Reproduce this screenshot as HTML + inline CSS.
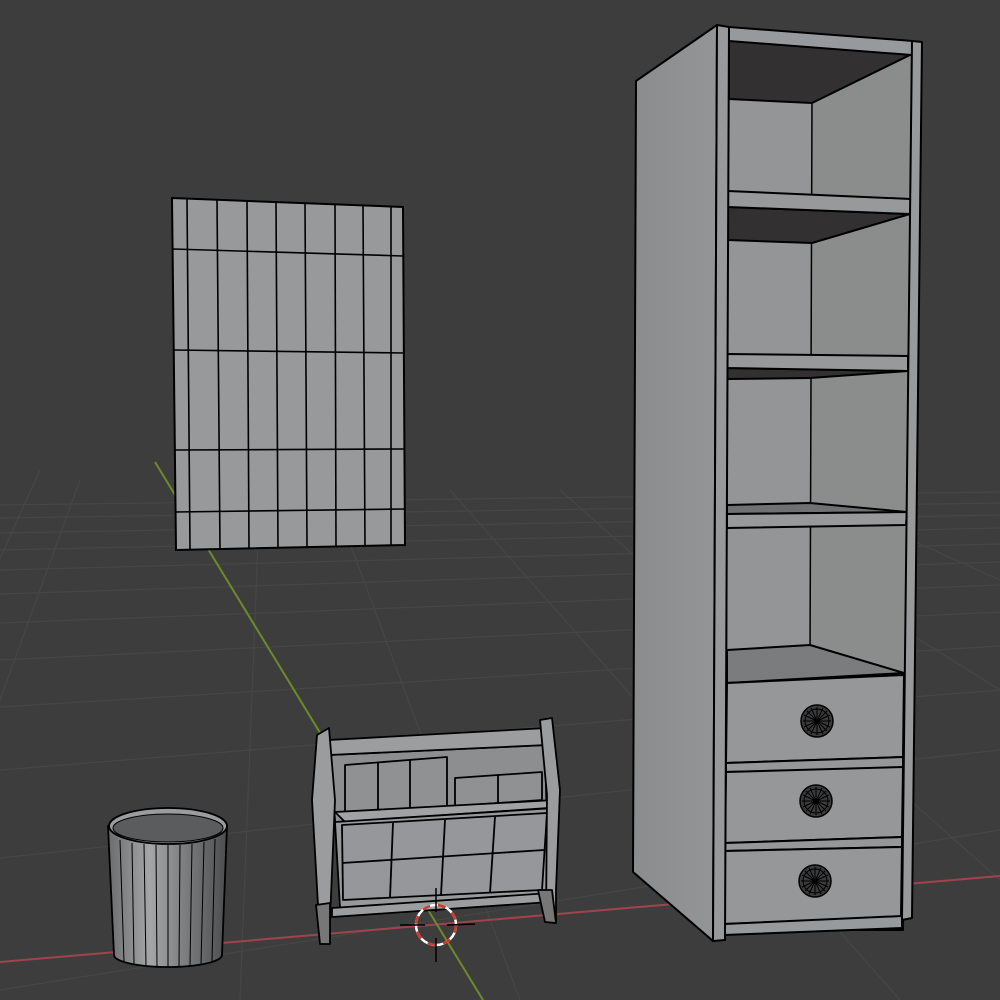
<!DOCTYPE html>
<html><head><meta charset="utf-8"><style>html,body{margin:0;padding:0;background:#3d3d3d;}svg{display:block}</style></head>
<body>
<svg width="1000" height="1000" viewBox="0 0 1000 1000" xmlns="http://www.w3.org/2000/svg">
<defs>
<linearGradient id="bin" x1="0" x2="1" y1="0" y2="0">
<stop offset="0" stop-color="#6a6c6d"/><stop offset="0.35" stop-color="#a4a6a7"/><stop offset="1" stop-color="#4c4d4e"/>
</linearGradient>
<linearGradient id="side" x1="0" x2="1" y1="0" y2="0">
<stop offset="0" stop-color="#8a8c8d"/><stop offset="1" stop-color="#939596"/>
</linearGradient>
</defs>
<rect width="1000" height="1000" fill="#3d3d3d"/>
<!-- grid -->
<g stroke="#464646" stroke-width="1.2" fill="none">
<line x1="0" y1="505" x2="1000" y2="492"/>
<line x1="0" y1="518" x2="1000" y2="503"/>
<line x1="0" y1="533" x2="1000" y2="515"/>
<line x1="0" y1="550" x2="1000" y2="528"/>
<line x1="0" y1="570" x2="1000" y2="544"/>
<line x1="0" y1="594" x2="1000" y2="562"/>
<line x1="0" y1="623" x2="1000" y2="585"/>
<line x1="0" y1="660" x2="1000" y2="612"/>
<line x1="0" y1="707" x2="1000" y2="646"/>
<line x1="0" y1="770" x2="1000" y2="690"/>
<line x1="0" y1="858" x2="1000" y2="750"/>
<line x1="0" y1="990" x2="1000" y2="830"/>
<line x1="40" y1="470" x2="-200" y2="1000"/>
<line x1="80" y1="480" x2="0" y2="700"/>
<line x1="260" y1="490" x2="240" y2="1000"/>
<line x1="330" y1="490" x2="520" y2="1000"/>
<line x1="450" y1="490" x2="900" y2="1000"/>
<line x1="560" y1="490" x2="1000" y2="880"/>
<line x1="680" y1="490" x2="1000" y2="690"/>
<line x1="800" y1="490" x2="1000" y2="580"/>
</g>
<!-- axes -->
<line x1="0" y1="962" x2="1000" y2="876" stroke="#a0434d" stroke-width="2"/>
<line x1="155" y1="462" x2="483" y2="1000" stroke="#6d8a2a" stroke-width="2"/>

<!-- poster -->
<polygon points="172,198 403,207 405,545 176,550" fill="#97999b" stroke="#000" stroke-width="2"/>
<g stroke="#000" stroke-width="1.6">
<line x1="187" y1="199" x2="190" y2="549"/><line x1="217" y1="200" x2="220" y2="549"/>
<line x1="247" y1="201" x2="249" y2="548"/><line x1="276" y1="202" x2="278" y2="548"/>
<line x1="305" y1="203" x2="307" y2="547"/><line x1="335" y1="204" x2="336" y2="547"/>
<line x1="363" y1="205" x2="365" y2="546"/><line x1="391" y1="206" x2="391" y2="546"/>
<line x1="173" y1="249" x2="403" y2="256"/><line x1="174" y1="350" x2="404" y2="353"/>
<line x1="175" y1="450" x2="405" y2="449"/><line x1="175" y1="512" x2="405" y2="509"/>
</g>

<!-- bookshelf -->
<g stroke="#000" stroke-width="2" stroke-linejoin="round">
<polygon points="636,81 717,25 713,941 633,872" fill="url(#side)"/>
<polygon points="729,40 912,53 903,930 727,930" fill="#8b8d8d"/>
<polygon points="729,40 812,45 810,700 727,700" fill="#939596" stroke="none"/>
<polygon points="729,40 912,54 812,103 729,99" fill="#323030"/>
<line x1="812" y1="103" x2="810" y2="660" stroke-width="1.5"/>
<polygon points="729,27 913,41 912,55 729,41" fill="#979a9c"/>
<polygon points="728,207 910,214 812,243 728,240" fill="#323030"/>
<polygon points="728,191 911,199 910,214 728,207" fill="#97999b"/>
<polygon points="727,368 908,371 810,378 727,379" fill="#323030"/>
<polygon points="727,354 908,356 908,371 727,368" fill="#97999b"/>
<polygon points="727,505 810,503 907,512 727,514" fill="#6f7172"/>
<polygon points="727,514 907,512 906,525 727,528" fill="#97999b"/>
<polygon points="727,650 810,645 904,673 727,683" fill="#7a7c7d"/>
<polygon points="727,683 904,675 903,757 726,763" fill="#959799"/>
<polygon points="726,763 903,757 903,768 726,772" fill="#959799"/>
<polygon points="726,772 903,767 902,837 725,843" fill="#959799"/>
<polygon points="725,843 902,837 902,847 725,851" fill="#959799"/>
<polygon points="725,851 902,847 901,917 724,924" fill="#959799"/>
<polygon points="724,924 902,916 902,928 724,935" fill="#979a9c"/>
<polygon points="717,25 729,27 725,940 713,941" fill="#97999b"/>
<polygon points="912,41 922,42 912,918 902,920" fill="#97999b"/>
</g>
<g fill="#3a3a3a" stroke="#000" stroke-width="1.5">
<circle cx="817" cy="721" r="16"/><circle cx="816" cy="801" r="16"/><circle cx="815" cy="881" r="16"/>
</g>
<g stroke="#000" stroke-width="1" fill="none">
<circle cx="817" cy="721" r="12"/><circle cx="816" cy="801" r="12"/><circle cx="815" cy="881" r="12"/>
<path d="M803 721h28M817 707v28M807 711l20 20M827 711l-20 20M804 715l26 12M804 727l26-12M811 708l12 26M823 708l-12 26"/>
<path d="M802 801h28M816 787v28M806 791l20 20M826 791l-20 20M803 795l26 12M803 807l26-12M810 788l12 26M822 788l-12 26"/>
<path d="M801 881h28M815 867v28M805 871l20 20M825 871l-20 20M802 875l26 12M802 887l26-12M809 868l12 26M821 868l-12 26"/>
</g>

<!-- magazine rack -->
<g stroke="#000" stroke-width="1.8" stroke-linejoin="round">
<polygon points="330,755 545,745 548,870 340,885" fill="#8c8e8f"/>
<polygon points="345,765 447,757 447,808 345,815" fill="#8f9193"/>
<line x1="378" y1="763" x2="378" y2="812"/><line x1="410" y1="760" x2="410" y2="810"/>
<polygon points="455,778 542,772 542,800 455,806" fill="#8f9193"/>
<line x1="498" y1="775" x2="498" y2="803"/>
<polygon points="329,740 547,728 547,745 329,755" fill="#9b9d9e"/>
<polygon points="335,812 555,800 548,808 345,822" fill="#a0a2a3"/>
<polygon points="335,822 555,808 548,895 340,908" fill="#97999b"/>
<polygon points="342,825 547,813 542,890 343,900" fill="#95979a"/>
<line x1="393" y1="823" x2="390" y2="898"/><line x1="445" y1="820" x2="441" y2="895"/><line x1="495" y1="817" x2="490" y2="893"/>
<line x1="342" y1="863" x2="544" y2="850"/>
<polygon points="332,908 550,893 550,902 332,917" fill="#9b9d9e"/>
<polygon points="317,735 329,728 335,800 330,920 320,940 312,800" fill="#9a9c9d"/>
<polygon points="540,720 552,718 560,790 556,890 556,923 546,922 547,795" fill="#9a9c9d"/>
<polygon points="316,905 330,903 330,944 320,944" fill="#777"/>
<polygon points="538,890 552,890 556,923 545,922" fill="#777"/>
</g>

<!-- bin -->
<g stroke="#000" stroke-width="1.8">
<path d="M108,826 L114,955 A54,12 0 0 0 222,955 L227,826 Z" fill="url(#bin)"/>
<ellipse cx="168" cy="826" rx="59" ry="18" fill="#9a9c9d"/>
<ellipse cx="168" cy="828" rx="55" ry="14" fill="#5a5c5d" stroke-width="1"/>
</g>
<g stroke="#000" stroke-width="1">
<line x1="120" y1="840" x2="124" y2="962"/><line x1="132" y1="843" x2="134" y2="965"/>
<line x1="144" y1="844" x2="146" y2="966"/><line x1="156" y1="845" x2="157" y2="967"/>
<line x1="168" y1="845" x2="168" y2="967"/><line x1="180" y1="845" x2="179" y2="967"/>
<line x1="192" y1="844" x2="190" y2="966"/><line x1="204" y1="842" x2="201" y2="964"/>
<line x1="215" y1="839" x2="212" y2="961"/>
</g>

<!-- 3D cursor -->
<circle cx="436" cy="925" r="20" fill="none" stroke="#fff" stroke-width="2.5"/>
<circle cx="436" cy="925" r="20" fill="none" stroke="#d03a2a" stroke-width="2.5" stroke-dasharray="8 8"/>
<g stroke="#000" stroke-width="1.5">
<line x1="400" y1="925" x2="425" y2="925"/><line x1="447" y1="925" x2="475" y2="924"/>
<line x1="436" y1="888" x2="436" y2="912"/><line x1="436" y1="938" x2="436" y2="962"/>
</g>
</svg>
</body></html>
